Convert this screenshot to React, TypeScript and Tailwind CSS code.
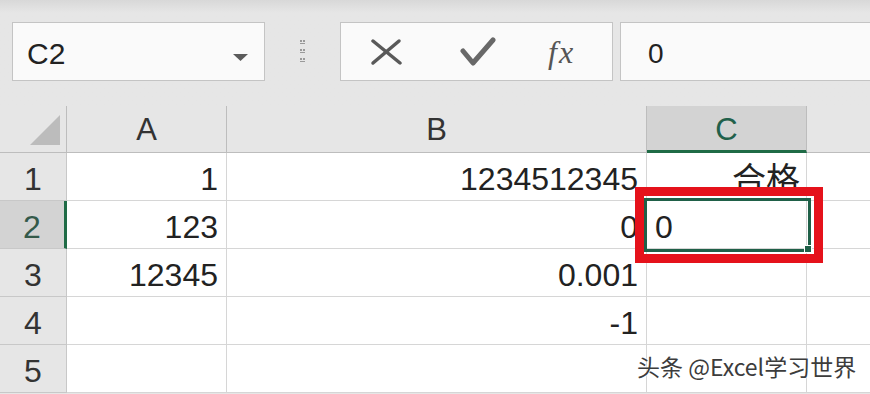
import React from 'react';

const rows = [
  { n: '1', a: '1', b: '1234512345', c: '合格' },
  { n: '2', a: '123', b: '0', c: '0' },
  { n: '3', a: '12345', b: '0.001', c: '' },
  { n: '4', a: '', b: '-1', c: '' },
  { n: '5', a: '', b: '', c: '' },
];

const cols = ['A', 'B', 'C'];

function Grip() {
  return (
    <svg width="8" height="26" viewBox="0 0 8 26" fill="#9a9a9a">
      <rect x="1" y="1" width="2" height="2" />
      <rect x="4" y="1" width="2" height="2" />
      <rect x="1" y="4" width="5" height="1" />
      <rect x="1" y="10" width="2" height="2" />
      <rect x="4" y="10" width="2" height="2" />
      <rect x="1" y="13" width="5" height="1" />
      <rect x="1" y="19" width="2" height="2" />
      <rect x="4" y="19" width="2" height="2" />
      <rect x="1" y="22" width="5" height="1" />
    </svg>
  );
}

export default function App() {
  return (
    <div
      className="relative w-[870px] h-[394px] overflow-hidden bg-[#e6e6e6] text-[#222]"
      style={{ fontFamily: '"Liberation Sans", "Noto Sans CJK SC", sans-serif' }}
    >
      {/* formula bar */}
      <div className="flex items-start h-[106px] pt-[22px] pl-[12px] bg-linear-to-b from-[#d8d8d8] via-[#e6e6e6] via-[12%] to-[#e6e6e6]">
        <div className="shrink-0 flex items-start justify-between w-[253px] h-[59px] border border-[#c4c4c4] bg-[#fafafa] pl-[14px] pr-[16px] pt-[16px]">
          <span className="text-[30px] leading-none">C2</span>
          <svg width="15" height="8" viewBox="0 0 15 8" className="self-center mb-[4px]">
            <path d="M0 0 H15 L7.5 7 Z" fill="#5b5b5b" />
          </svg>
        </div>
        <div className="shrink-0 flex items-center justify-center w-[75px] h-[59px]">
          <Grip />
        </div>
        <div className="shrink-0 flex items-center w-[273px] h-[59px] border border-[#c4c4c4] bg-[#fafafa] pl-[29px]">
          <svg width="32" height="28" viewBox="0 0 32 28" fill="none" stroke="#595959" strokeWidth="3.5" strokeLinecap="round">
            <path d="M3 3 L30 25" />
            <path d="M29 3 L3 25" />
          </svg>
          <svg width="36" height="30" viewBox="0 0 36 30" fill="none" stroke="#686868" strokeWidth="5" strokeLinecap="round" strokeLinejoin="round" className="ml-[58px]">
            <path d="M3 14 L13 26 L33 3" />
          </svg>
          <span
            className="ml-[52px] text-[32px] italic leading-none text-[#555] tracking-[2px]"
            style={{ fontFamily: '"Liberation Serif", serif' }}
          >
            fx
          </span>
        </div>
        <div className="shrink-0 ml-[7px] w-[270px] h-[59px] border border-[#c4c4c4] bg-[#fafafa] pl-[27px] pt-[17px]">
          <span className="text-[28px] leading-none">0</span>
        </div>
      </div>

      {/* sheet */}
      <div className="grid grid-cols-[67px_160px_420px_160px_63px] grid-rows-[47px_repeat(5,48px)]">
        <div className="relative border-r border-b border-[#bdbdbd]">
          <svg width="31" height="31" viewBox="0 0 31 31" className="absolute left-[30px] top-[9px]">
            <path d="M0 30 H30 V0 Z" fill="#bcbcbc" />
          </svg>
        </div>
        {cols.map((c) => (
          <div
            key={c}
            className={
              c === 'C'
                ? 'flex justify-center items-start pt-[8px] bg-[#d3d3d3] border-r border-[#bdbdbd] border-b-[3px] border-b-[#1f6b46] text-[31px] leading-none text-[#21604a]'
                : 'flex justify-center items-start pt-[8px] border-r border-b border-[#bdbdbd] text-[31px] leading-none text-[#333]'
            }
          >
            {c}
          </div>
        ))}
        <div className="border-b border-[#bdbdbd]" />

        {rows.map((r) => (
          <React.Fragment key={r.n}>
            <div
              className={
                r.n === '2'
                  ? 'flex justify-center items-end pb-[5px] bg-[#d3d3d3] border-b border-[#c8c8c8] border-r-[3px] border-r-[#1f6b46] text-[32px] leading-none text-[#345a4a]'
                  : 'flex justify-center items-end pb-[5px] border-r border-b border-[#c8c8c8] text-[32px] leading-none text-[#333]'
              }
            >
              {r.n}
            </div>
            <div className="flex justify-end items-end pb-[5px] pr-[8px] bg-white border-r border-b border-[#d6d6d6] text-[32px] leading-none">
              {r.a}
            </div>
            <div className="flex justify-end items-end pb-[5px] pr-[8px] bg-white border-r border-b border-[#d6d6d6] text-[32px] leading-none">
              {r.b}
            </div>
            <div
              className={
                r.n === '2'
                  ? 'flex justify-start items-end pb-[5px] pl-[8px] bg-white border-r border-b border-[#d6d6d6] text-[32px] leading-none'
                  : 'flex justify-end items-end pb-[3px] pr-[6px] bg-white border-r border-b border-[#d6d6d6] text-[34px] leading-none'
              }
            >
              {r.c}
            </div>
            <div className="bg-white border-b border-[#d6d6d6]" />
          </React.Fragment>
        ))}
      </div>

      {/* active cell C2 */}
      <div className="absolute left-[644px] top-[198px] w-[167px] h-[54px] border-[3px] border-[#1f6048]" />
      <div className="absolute left-[804px] top-[245px] w-[8px] h-[8px] bg-[#1f6048] border border-white" />

      {/* red annotation */}
      <div className="absolute left-[635px] top-[187px] w-[188px] h-[76px] border-[9px] border-[#e5121b]" />

      {/* watermark */}
      <div
        className="absolute left-[637px] top-[355px] text-[23px] leading-none text-[#3c3c3c] [text-shadow:0_0_2px_#fff,0_0_2px_#fff]"
        style={{ fontFamily: '"Noto Sans CJK SC", "Liberation Sans", sans-serif' }}
      >
        头条 @Excel学习世界
      </div>
    </div>
  );
}
